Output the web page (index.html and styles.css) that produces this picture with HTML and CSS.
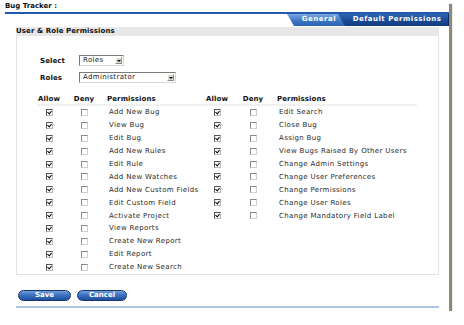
FILE: index.html
```html
<!DOCTYPE html>
<html>
<head>
<meta charset="utf-8">
<title>Bug Tracker</title>
<link rel="stylesheet" href="styles.css">
</head>
<body>
<div class="card">
  <div class="title">Bug Tracker :</div>
  <div class="tabs">
    <span class="tab tab-general">General</span>
    <span class="tab tab-default">Default Permissions</span>
  </div>
  <section class="panel">
    <div class="panel-head">User &amp; Role Permissions</div>
    <div class="panel-body">
      <div class="field">
        <span class="label">Select</span>
        <span class="select select-sm">Roles<span class="arrow"></span></span>
      </div>
      <div class="field">
        <span class="label">Roles</span>
        <span class="select select-lg">Administrator<span class="arrow"></span></span>
      </div>
      <div class="perm-grid">
        <div class="hd c">Allow</div><div class="hd c">Deny</div><div class="hd p">Permissions</div>
        <div class="hd c">Allow</div><div class="hd c">Deny</div><div class="hd p">Permissions</div>

        <div class="c"><span class="cb on"></span></div><div class="c"><span class="cb"></span></div><div class="p">Add New Bug</div>
        <div class="c"><span class="cb on"></span></div><div class="c"><span class="cb"></span></div><div class="p">Edit Search</div>

        <div class="c"><span class="cb on"></span></div><div class="c"><span class="cb"></span></div><div class="p">View Bug</div>
        <div class="c"><span class="cb on"></span></div><div class="c"><span class="cb"></span></div><div class="p">Close Bug</div>

        <div class="c"><span class="cb on"></span></div><div class="c"><span class="cb"></span></div><div class="p">Edit Bug</div>
        <div class="c"><span class="cb on"></span></div><div class="c"><span class="cb"></span></div><div class="p">Assign Bug</div>

        <div class="c"><span class="cb on"></span></div><div class="c"><span class="cb"></span></div><div class="p">Add New Rules</div>
        <div class="c"><span class="cb on"></span></div><div class="c"><span class="cb"></span></div><div class="p">View Bugs Raised By Other Users</div>

        <div class="c"><span class="cb on"></span></div><div class="c"><span class="cb"></span></div><div class="p">Edit Rule</div>
        <div class="c"><span class="cb on"></span></div><div class="c"><span class="cb"></span></div><div class="p">Change Admin Settings</div>

        <div class="c"><span class="cb on"></span></div><div class="c"><span class="cb"></span></div><div class="p">Add New Watches</div>
        <div class="c"><span class="cb on"></span></div><div class="c"><span class="cb"></span></div><div class="p">Change User Preferences</div>

        <div class="c"><span class="cb on"></span></div><div class="c"><span class="cb"></span></div><div class="p">Add New Custom Fields</div>
        <div class="c"><span class="cb on"></span></div><div class="c"><span class="cb"></span></div><div class="p">Change Permissions</div>

        <div class="c"><span class="cb on"></span></div><div class="c"><span class="cb"></span></div><div class="p">Edit Custom Field</div>
        <div class="c"><span class="cb on"></span></div><div class="c"><span class="cb"></span></div><div class="p">Change User Roles</div>

        <div class="c"><span class="cb on"></span></div><div class="c"><span class="cb"></span></div><div class="p">Activate Project</div>
        <div class="c"><span class="cb on"></span></div><div class="c"><span class="cb"></span></div><div class="p">Change Mandatory Field Label</div>

        <div class="c"><span class="cb on"></span></div><div class="c"><span class="cb"></span></div><div class="p">View Reports</div>
        <div></div><div></div><div></div>

        <div class="c"><span class="cb on"></span></div><div class="c"><span class="cb"></span></div><div class="p">Create New Report</div>
        <div></div><div></div><div></div>

        <div class="c"><span class="cb on"></span></div><div class="c"><span class="cb"></span></div><div class="p">Edit Report</div>
        <div></div><div></div><div></div>

        <div class="c"><span class="cb on"></span></div><div class="c"><span class="cb"></span></div><div class="p">Create New Search</div>
        <div></div><div></div><div></div>
      </div>
    </div>
  </section>
  <div class="actions">
    <button class="btn btn-save" type="button">Save</button>
    <button class="btn btn-cancel" type="button">Cancel</button>
  </div>
  <div class="rule"></div>
</div>
</body>
</html>
```
FILE: styles.css
```css
* { box-sizing: border-box; }
html, body { margin: 0; padding: 0; background: #fff; }
body {
  font-family: "DejaVu Sans", Verdana, sans-serif;
  font-size: 7px;
  letter-spacing: 0.35px;
  color: #2a2a2a;
}
.card {
  margin-left: 2px;
  width: 447px;
  height: 311px;
  background: #fff;
  box-shadow: 3px 4px 1px #8a8b76;
  display: flex;
  flex-direction: column;
}
.title {
  margin-left: 3px;
  height: 14px;
  line-height: 12px;
  font-weight: bold;
  letter-spacing: 0;
  color: #111;
  border-bottom: 2px solid #2159ad;
}
.tabs {
  display: flex;
  justify-content: flex-end;
  height: 12px;
}
.tab {
  height: 12px;
  line-height: 11px;
  color: #fff;
  font-weight: bold;
  letter-spacing: 0.5px;
  clip-path: polygon(0 0, 100% 0, 100% 100%, 7px 100%);
  text-align: center;
  padding-left: 6px;
}
.tab-general {
  width: 58px;
  background: linear-gradient(#7aa8e2, #3b74c4 60%, #2d63b2);
}
.tab-default {
  width: 111px;
  margin-left: -7px;
  padding-left: 8px;
  background: linear-gradient(#2f64b4, #1a4791 60%, #133c80);
  border-right: 1px solid #0b2a5e;
}
.panel {
  margin: 1px 10px 0 14px;
  display: flex;
  flex-direction: column;
}
.panel-head {
  height: 9px;
  line-height: 9px;
  background: #e7e7e7;
  font-weight: bold;
  letter-spacing: 0.1px;
  color: #111;
}
.panel-body {
  border: 1px solid #e2e2e2;
  border-top: none;
  padding: 19px 0 0 20px;
}
.field {
  display: flex;
  align-items: center;
  height: 11px;
  margin-bottom: 6px;
}
.label {
  width: 39px;
  margin-left: 3px;
  font-weight: bold;
  letter-spacing: 0.1px;
  color: #111;
}
.select {
  position: relative;
  height: 11px;
  line-height: 9px;
  padding-left: 3px;
  border: 1px solid;
  border-color: #7a7a7a #d8d8d8 #d8d8d8 #7a7a7a;
  background: #fff;
  color: #222;
}
.select-sm { width: 45px; }
.select-lg { width: 97px; }
.arrow {
  position: absolute;
  right: 1px;
  top: 1px;
  width: 7px;
  height: 7px;
  background: #dedad2;
  border: 1px solid;
  border-color: #fff #8a8a8a #8a8a8a #fff;
}
.arrow::after {
  content: "";
  position: absolute;
  left: 1px;
  top: 2px;
  border-left: 2px solid transparent;
  border-right: 2px solid transparent;
  border-top: 2px solid #000;
}
.perm-grid {
  margin-top: 12px;
  width: 380px;
  display: grid;
  grid-template-columns: 24px 46px 98px 24px 48px 1fr;
  grid-auto-rows: 12.9px;
  grid-template-rows: 11px;
}
.perm-grid .hd {
  font-weight: bold;
  letter-spacing: 0.1px;
  color: #111;
  line-height: 9px;
  border-bottom: 2px solid #f0f0f0;
}
.c { display: flex; align-items: center; justify-content: center; }
.p { display: flex; align-items: center; padding-left: 2px; white-space: nowrap; }
.hd.p { padding-left: 0; }
.cb {
  position: relative;
  width: 7px;
  height: 7px;
  border: 1px solid;
  border-color: #8a8a8a #d0d0d0 #d0d0d0 #8a8a8a;
  background: #fff;
}
.cb.on { border-color: #555 #bbb #bbb #555; }
.cb.on::after {
  content: "";
  position: absolute;
  left: 1px;
  top: 0px;
  width: 2px;
  height: 3px;
  border-right: 1px solid #000;
  border-bottom: 1px solid #000;
  transform: rotate(40deg);
}
.actions {
  display: flex;
  gap: 6px;
  margin: 15px 0 0 16px;
}
.btn {
  height: 11px;
  padding: 0;
  border: 1px solid #15356c;
  border-radius: 6px;
  background: linear-gradient(#6f9fdc, #3c71bf 45%, #1f4f9b);
  color: #fff;
  font-family: "DejaVu Sans", Verdana, sans-serif;
  font-size: 7px;
  font-weight: bold;
  line-height: 9px;
}
.btn-save { width: 53px; }
.btn-cancel { width: 50px; }
.rule {
  margin: 5px 10px 0 14px;
  height: 2px;
  background: #a9c6e6;
}
```
